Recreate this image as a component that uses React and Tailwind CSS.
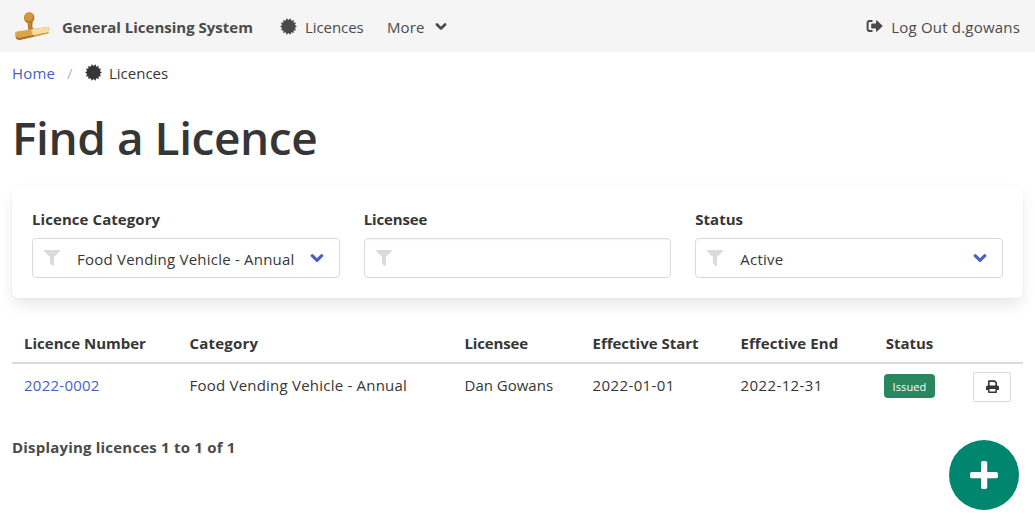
import React from "react";
import { FaFilter } from "react-icons/fa";

const BURST = Array.from({ length: 28 }, (_, i) => {
  const r = i % 2 ? 6.5 : 8.4;
  const a = ((i + 1) * Math.PI) / 14;
  return `${(8.5 + r * Math.sin(a)).toFixed(2)},${(8.5 - r * Math.cos(a)).toFixed(2)}`;
}).join(" ");

function Burst({ className = "" }) {
  return (
    <svg className={"size-[17px] shrink-0 " + className} viewBox="0 0 17 17" fill="currentColor">
      <polygon points={BURST} />
    </svg>
  );
}

function Stamp() {
  return (
    <svg className="h-[30px] w-9 shrink-0" viewBox="0 0 36 30">
      <path d="M13.6 11 L18.6 11 L18.2 16 L20.6 19 L14.4 20 Z" fill="#b06e20" />
      <path d="M14.8 11 L17 11 L16.5 18 L15.4 19 Z" fill="#cf9339" />
      <ellipse cx="15.2" cy="6.8" rx="5.2" ry="5.6" fill="#bd7b27" />
      <ellipse cx="14.8" cy="5.8" rx="4" ry="4.2" fill="#d29740" />
      <path d="M1 22 Q1 20.8 3 20.4 L33 16 Q35.8 16 35.6 18 L34.6 22 L20 25.4 L6 28.6 Q2 28.8 1.6 26 Z" fill="#d9a549" />
      <path d="M17 18.4 L33 16 Q35.8 16 35.6 18 L34.8 21.6 L19 24.6 Z" fill="#f5dca3" />
      <path d="M1.4 25.5 L5 27 L20 24 L20 25.8 L6 29 Q2.2 29 1.6 26 Z" fill="#b06e20" />
      <path d="M20 24.2 L34.8 21 L34.2 22.6 L20 25.8 Z" fill="#d5993d" />
    </svg>
  );
}

function SignOut() {
  return (
    <svg className="-mt-px ml-auto h-4 w-[17px] shrink-0" viewBox="0 0 17 16" fill="currentColor">
      <path d="M6.5 13 H3.6 Q1.6 13 1.6 11 V5 Q1.6 3 3.6 3 H6.5" fill="none" stroke="currentColor" strokeWidth="2" />
      <path d="M5.2 6.2 Q5.2 5.4 6 5.4 H10 V3 Q10 1.8 11 2.6 L16.3 7.4 Q16.9 8 16.3 8.6 L11 13.4 Q10 14.2 10 13 V10.6 H6 Q5.2 10.6 5.2 9.8 Z" />
    </svg>
  );
}

function Chevron({ className }) {
  return (
    <svg className={"shrink-0 " + className} viewBox="0 0 14 10" fill="none" stroke="currentColor" strokeWidth="3.1" strokeLinecap="round" strokeLinejoin="round">
      <path d="M2.2 2.7 L7 7.3 L11.8 2.7" />
    </svg>
  );
}

function Printer() {
  return (
    <svg className="size-[13px]" viewBox="0 0 12 12" fill="currentColor">
      <path d="M2.6 6 V1 H8 L9.4 2.4 V6" fill="none" stroke="currentColor" strokeWidth="1.5" strokeLinejoin="round" />
      <path d="M1.5 5 H10.5 Q12 5 12 6.5 V8.7 Q12 9.2 11.5 9.2 H9.5 V7.6 H2.5 V9.2 H0.5 Q0 9.2 0 8.7 V6.5 Q0 5 1.5 5 Z" />
      <path d="M2.6 7.5 H9.4 V11.2 H2.6 Z" fill="none" stroke="currentColor" strokeWidth="1.4" strokeLinejoin="round" />
    </svg>
  );
}

function Field({ label, value, inset, spacing = "", labelSpacing = "" }) {
  return (
    <div className="min-w-0 flex-1">
      <div className={"h-6 pt-px text-[15px] leading-6 font-bold " + labelSpacing}>{label}</div>
      <div className={"mt-2 flex h-10 items-center rounded border border-[#dbdbdb] bg-white pr-[15px] pl-[11px] " + (inset ? "shadow-[inset_0_1px_2px_rgba(10,10,10,0.05)]" : "")}>
        <FaFilter className="size-4 shrink-0 text-[#dbdbdb]" />
        <span className={"ml-[17px] flex-1 whitespace-nowrap pt-0.5 text-[15px] leading-6 " + spacing}>{value}</span>
        {!inset && <Chevron className="h-[10px] w-[14px] text-[#485fc7]" />}
      </div>
    </div>
  );
}

export default function App() {
  return (
    <div className="flex h-[526px] w-[1035px] flex-col overflow-hidden bg-white font-['Open_Sans','Noto_Sans',sans-serif] text-[15px] leading-6 text-[#363636]">
      <nav className="flex h-[52px] shrink-0 items-center bg-[#f5f5f5] pr-[15px] pl-[14px] whitespace-nowrap text-[#4a4a4a]">
        <Stamp />
        <span className="ml-3 w-[218px] pt-0.5 font-bold">General Licensing System</span>
        <Burst />
        <span className="ml-[8px] w-[82px] pt-0.5 tracking-[-0.08px]">Licences</span>
        <span className="w-[48px] pt-0.5 tracking-[0.1px]">More</span>
        <Chevron className="h-[9px] w-[12px]" />
        <SignOut />
        <span className="ml-2 pt-0.5 tracking-[0.2px]">Log Out d.gowans</span>
      </nav>

      <main className="flex flex-col px-3">
        <div className="flex h-[42px] items-center whitespace-nowrap">
          <a className="w-[55px] tracking-[0.2px] text-[#485fc7]">Home</a>
          <span className="w-[18px] text-[#b5b5b5]">/</span>
          <Burst className="-mt-0.5" />
          <span className="ml-[7px]">Licences</span>
        </div>

        <h1 className="mt-[16px] h-[54px] text-[46px] leading-[54px] font-semibold tracking-[-0.45px] whitespace-nowrap">Find a Licence</h1>

        <section className="mt-[22px] flex h-[112px] gap-6 rounded-md bg-white px-5 pt-5 shadow-[0_8px_16px_-2px_rgba(10,10,10,0.1),0_0_0_1px_rgba(10,10,10,0.02)]">
          <Field label="Licence Category" value="Food Vending Vehicle - Annual" spacing="tracking-[0.22px]" labelSpacing="tracking-[0.07px]" />
          <Field label="Licensee" value="" inset labelSpacing="tracking-[-0.15px]" />
          <Field label="Status" value="Active" spacing="tracking-[0.2px]" />
        </section>

        <table className="mt-[25px] w-[1011px] table-fixed border-collapse text-left whitespace-nowrap">
          <colgroup>
            <col className="w-[165.5px]" />
            <col className="w-[275px]" />
            <col className="w-[128px]" />
            <col className="w-[148px]" />
            <col className="w-[130px]" />
            <col className="w-[102px]" />
            <col />
          </colgroup>
          <thead>
            <tr className="h-[40px] border-b-2 border-[#dbdbdb]">
              <th className="px-3 py-0">Licence Number</th>
              <th className="px-3 py-0 tracking-[0.2px]">Category</th>
              <th className="px-3 py-0 tracking-[-0.15px]">Licensee</th>
              <th className="px-3 py-0">Effective Start</th>
              <th className="px-3 py-0 tracking-[0.08px]">Effective End</th>
              <th className="px-3 py-0 text-center">Status</th>
              <th />
            </tr>
          </thead>
          <tbody>
            <tr className="h-[46px]">
              <td className="px-3 pt-0 pb-1 tracking-[0.25px] text-[#485fc7]">2022-0002</td>
              <td className="px-3 pt-0 pb-1 tracking-[0.22px]">Food Vending Vehicle - Annual</td>
              <td className="px-3 pt-0 pb-1">Dan Gowans</td>
              <td className="px-3 pt-0 pb-1 tracking-[0.4px]">2022-01-01</td>
              <td className="px-3 pt-0 pb-1 tracking-[0.4px]">2022-12-31</td>
              <td className="px-3 pt-0 pb-0.5">
                <div className="mx-auto flex h-6 w-[51px] items-center justify-center rounded bg-[#2a865e] pt-0.5 text-[11px] tracking-[0.1px] text-white">Issued</div>
              </td>
              <td className="pr-3">
                <div className="ml-auto flex h-[30px] w-[38px] items-center justify-center rounded-[2px] border border-[#dbdbdb]">
                  <Printer />
                </div>
              </td>
            </tr>
          </tbody>
        </table>

        <p className="mt-[26px] font-bold tracking-[0.2px] text-[#4a4a4a]">Displaying licences 1 to 1 of 1</p>
      </main>

      <button className="absolute top-[440px] left-[949px] flex size-[70px] items-center justify-center rounded-full bg-[#00856f] text-white">
        <svg className="size-7" viewBox="0 0 28 28" fill="currentColor">
          <rect x="11" y="0" width="6.2" height="28" rx="1.8" />
          <rect x="0" y="11" width="28" height="6.2" rx="1.8" />
        </svg>
      </button>
    </div>
  );
}
